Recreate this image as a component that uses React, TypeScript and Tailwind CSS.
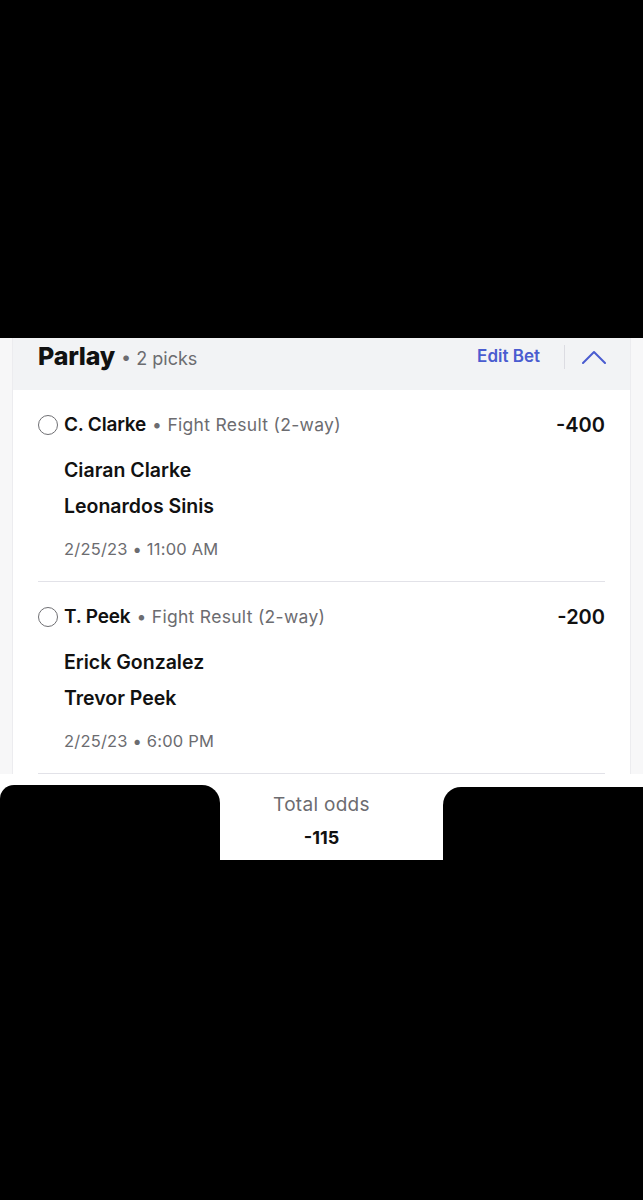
import React from 'react';

interface Pick {
  short: string;
  market: string;
  odds: string;
  fighters: string[];
  when: string;
}

const picks: Pick[] = [
  { short: 'C. Clarke', market: 'Fight Result (2-way)', odds: '-400', fighters: ['Ciaran Clarke', 'Leonardos Sinis'], when: '2/25/23 • 11:00 AM' },
  { short: 'T. Peek', market: 'Fight Result (2-way)', odds: '-200', fighters: ['Erick Gonzalez', 'Trevor Peek'], when: '2/25/23 • 6:00 PM' },
];

const PickRow: React.FC<{ pick: Pick }> = ({ pick }) => (
  <div className="pt-[23px] pb-[20px] border-b border-[#e2e2e8]">
    <div className="flex items-center h-[24px]">
      <span className="w-[20px] h-[20px] rounded-full border-[1.5px] border-[#6f6f73] shrink-0" />
      <span className="ml-[6px] text-[19px] font-semibold text-[#111] tracking-[-0.2px]">{pick.short}</span>
      <span className="ml-[6px] text-[17.5px] text-[#6c6c70] tracking-[0.3px]">• {pick.market}</span>
      <span className="ml-auto text-[20px] font-semibold text-[#111]">{pick.odds}</span>
    </div>
    <div className="pl-[26px] mt-[16px]">
      {pick.fighters.map(f => (
        <div key={f} className="h-[36px] flex items-center text-[19.5px] font-semibold text-[#111]">{f}</div>
      ))}
      <div className="mt-[12px] h-[24px] flex items-center text-[16.5px] text-[#6c6c70] tracking-[0.2px]">{pick.when}</div>
    </div>
  </div>
);

export default function App() {
  return (
    <div className="w-[643px] h-[1200px] bg-black flex flex-col font-['Inter',sans-serif]">
      <div className="h-[338px] shrink-0" />
      <div className="bg-[#f7f7f8] px-[12px] shrink-0">
        <div className="bg-white border-x border-[#ececef]">
          <div className="h-[52px] bg-[#f2f3f5] pl-[25px] pr-[24px]">
            <div className="h-[38px] flex items-center">
              <span className="text-[25px] font-extrabold text-[#111] tracking-[-0.2px]">Parlay</span>
              <span className="ml-[6px] text-[18px] text-[#6c6c70] mt-[3px]">• 2 picks</span>
              <span className="ml-auto text-[17px] font-semibold text-[#4a5cd0]">Edit Bet</span>
              <span className="ml-[24px] w-px h-[24px] bg-[#dcdce2]" />
              <svg className="ml-[17px]" width="24" height="14" viewBox="0 0 24 14" fill="none">
                <polyline points="1,13 12,2 23,13" stroke="#4a5cd0" strokeWidth="2" strokeLinecap="round" strokeLinejoin="round" />
              </svg>
            </div>
          </div>
          <div className="px-[25px]">
            {picks.map(p => <PickRow key={p.short} pick={p} />)}
          </div>
        </div>
      </div>
      <div className="h-[86px] bg-white flex shrink-0">
        <div className="w-[220px] mt-[11px] bg-black rounded-tr-[18px] rounded-tl-[14px]" />
        <div className="flex-1 flex flex-col items-center pt-[19px] pr-[20px]">
          <div className="h-[24px] flex items-center text-[19px] text-[#6c6c70] tracking-[0.3px]">Total odds</div>
          <div className="mt-[8px] h-[24px] flex items-center text-[18px] font-bold text-[#111]">-115</div>
        </div>
        <div className="w-[200px] mt-[13px] bg-black rounded-tl-[18px]" />
      </div>
    </div>
  );
}
